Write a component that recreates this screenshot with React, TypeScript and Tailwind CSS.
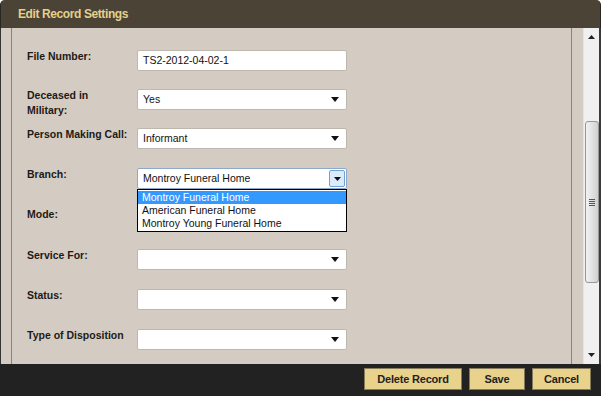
import React from "react";

const labelCls = "w-[110px] shrink-0 text-[10.5px] font-bold leading-[15px] text-[#1e1a16] -mt-px";
const fieldCls = "h-[21px] w-[210px] bg-white border border-[#bdb7ae] rounded-[2px] flex items-center px-[5px] text-[10.5px] text-[#111]";

function Arrow() {
  return (
    <svg width="8" height="5" viewBox="0 0 8 5" className="ml-auto mr-[2px]">
      <path d="M0 0h8L4 5z" fill="#111" />
    </svg>
  );
}

function Row({ label, h = 40, children }: { label: React.ReactNode; h?: number; children?: React.ReactNode }) {
  return (
    <div className="flex pl-[15px] shrink-0" style={{ height: h }}>
      <div className={labelCls}>{label}</div>
      <div className="relative">{children}</div>
    </div>
  );
}

function Select({ value }: { value?: string }) {
  return (
    <div className={fieldCls}>
      <span>{value}</span>
      <Arrow />
    </div>
  );
}

export default function App() {
  const branches = ["Montroy Funeral Home", "American Funeral Home", "Montroy Young Funeral Home"];
  return (
    <div
      className="w-[601px] h-[396px] flex flex-col bg-white overflow-hidden"
      style={{ fontFamily: '"Liberation Sans", Arial, sans-serif' }}
    >
      <div className="h-[28px] shrink-0 bg-[#4a4336] rounded-t-[5px] border-l border-r border-[#2a2621] flex items-center pl-[17px]">
        <span className="text-[12px] font-bold tracking-[-0.4px] text-[#e6d08a]">Edit Record Settings</span>
      </div>

      <div className="flex-1 min-h-0 flex bg-[#d4ccc2] border-l border-[#333] overflow-hidden">
        <div className="w-[10px] shrink-0" />
        <div className="w-[561px] shrink-0 border-l border-r border-[#8c8479] pt-[22px] overflow-hidden">
          <Row label="File Number:" h={39}>
            <div className={fieldCls}>TS2-2012-04-02-1</div>
          </Row>
          <Row label={<>Deceased in<br />Military:</>} h={39}>
            <Select value="Yes" />
          </Row>
          <Row label="Person Making Call:">
            <Select value="Informant" />
          </Row>
          <Row label="Branch:">
            <div className="h-[21px] w-[210px] bg-white border border-[#8fa9c8] rounded-[2px] flex items-center pl-[5px] text-[10.5px] text-[#111]">
              <span>Montroy Funeral Home</span>
              <div className="ml-auto mr-px h-[17px] w-[16px] border border-[#6fa3d8] bg-[#dcebfa] rounded-[2px] flex items-center justify-center">
                <svg width="7" height="4" viewBox="0 0 7 4">
                  <path d="M0 0h7L3.5 4z" fill="#111" />
                </svg>
              </div>
            </div>
            <div className="absolute left-0 top-[21px] w-[210px] bg-white border border-black z-10 py-px text-[10.5px] leading-[13px]">
              {branches.map((b, i) => (
                <div key={b} className={i === 0 ? "bg-[#3399ff] text-white px-[4px]" : "text-[#111] px-[4px]"}>
                  {b}
                </div>
              ))}
            </div>
          </Row>
          <Row label="Mode:" h={41}>
            <Select />
          </Row>
          <Row label="Service For:">
            <Select />
          </Row>
          <Row label="Status:">
            <Select />
          </Row>
          <Row label="Type of Disposition">
            <Select />
          </Row>
        </div>
        <div className="w-[11px] shrink-0" />
        <div className="w-[16px] shrink-0 bg-[#f0f0f0] border-l border-[#e4e4e4] flex flex-col items-center py-[7px]">
          <svg width="7" height="4" viewBox="0 0 7 4">
            <path d="M3.5 0L7 4H0z" fill="#222" />
          </svg>
          <div className="mt-[82px] w-[14px] h-[162px] rounded-[3px] border border-[#979797] bg-gradient-to-r from-[#f2f2f2] via-[#e2e2e2] to-[#cfcfcf] flex flex-col items-center justify-center gap-[1px]">
            <div className="w-[6px] h-px bg-[#555]" />
            <div className="w-[6px] h-px bg-[#555]" />
            <div className="w-[6px] h-px bg-[#555]" />
            <div className="w-[6px] h-px bg-[#555]" />
          </div>
          <svg width="7" height="4" viewBox="0 0 7 4" className="mt-auto">
            <path d="M0 0h7L3.5 4z" fill="#222" />
          </svg>
        </div>
        <div className="w-[2px] shrink-0 bg-[#3a3a3a]" />
      </div>

      <div className="h-[32px] shrink-0 bg-[#222222] flex items-start justify-end gap-[7px] pr-[10px] pt-[4px]">
        {[["Delete Record", "w-[98px]"], ["Save", "w-[56px]"], ["Cancel", "w-[59px]"]].map(([t, w]) => (
          <button
            key={t}
            className={`${w} h-[22px] bg-[#e8d28c] border border-[#857a5a] text-[11px] font-bold text-[#222] tracking-[-0.2px]`}
          >
            {t}
          </button>
        ))}
      </div>
    </div>
  );
}
